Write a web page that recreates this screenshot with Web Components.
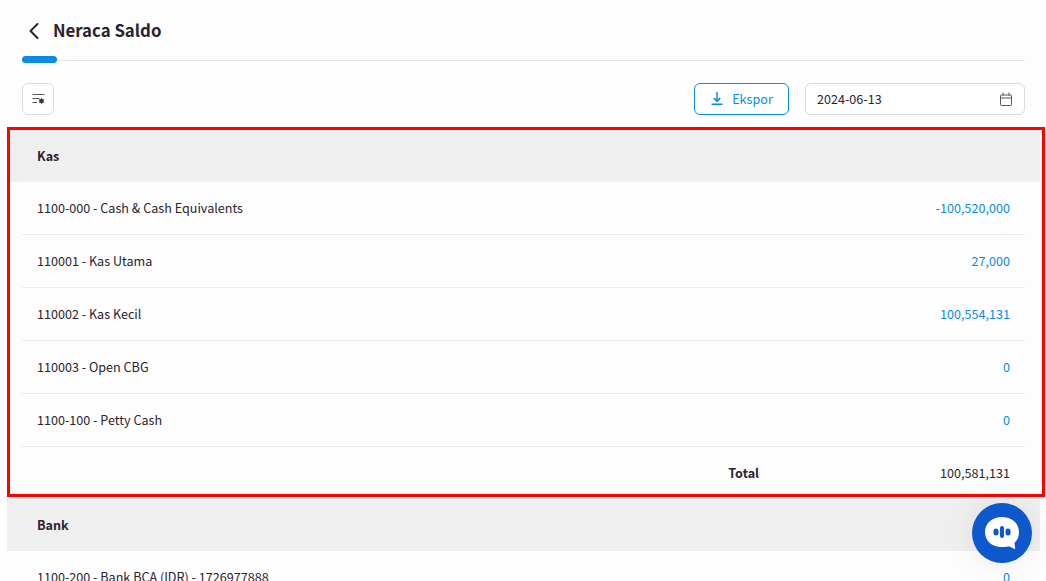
<!DOCTYPE html>
<html>
<head>
<meta charset="utf-8">
<title>Neraca Saldo</title>
<style>
  html, body { margin: 0; height: 581px; overflow: hidden; background: #fdfdfd; }
  body { font-family: "Noto Sans CJK JP", "Noto Sans", sans-serif; color: #2b2330; font-size: 12.6px; }
</style>
</head>
<body>
<page-header title="Neraca Saldo"></page-header>
<page-toolbar date="2024-06-13"></page-toolbar>
<saldo-list>
  <saldo-group label="Kas">
    <saldo-row name="1100-000 - Cash &amp; Cash Equivalents" value="-100,520,000"></saldo-row>
    <saldo-row name="110001 - Kas Utama" value="27,000"></saldo-row>
    <saldo-row name="110002 - Kas Kecil" value="100,554,131"></saldo-row>
    <saldo-row name="110003 - Open CBG" value="0"></saldo-row>
    <saldo-row name="1100-100 - Petty Cash" value="0"></saldo-row>
    <saldo-total value="100,581,131"></saldo-total>
  </saldo-group>
  <saldo-group label="Bank">
    <saldo-row name="1100-200 - Bank BCA (IDR) - 1726977888" value="0"></saldo-row>
  </saldo-group>
</saldo-list>
<highlight-box></highlight-box>
<chat-button></chat-button>

<script>
// Header with back arrow and tab underline
class PageHeader extends HTMLElement {
  connectedCallback() {
    const shadowRoot = this.attachShadow({ mode: "open" });
    shadowRoot.innerHTML = `
      <style>
        :host { display: block; padding: 0 21px 0 22px; }
        .top { display: flex; align-items: center; gap: 11px; height: 56px; padding-top: 4px; box-sizing: border-box; }
        svg { display: block; margin-left: 4px; }
        h1 { margin: 0; font-size: 16.8px; line-height: 20px; font-weight: 700; color: #2b2330; }
        .tabs { height: 4px; border-bottom: 1px solid #e6e6e6; }
        .tabs i { display: block; width: 35px; height: 7px; border-radius: 4px; background: #0a8be6; }
      </style>
      <div class="top">
        <svg width="16" height="20" viewBox="0 0 16 20" fill="none" stroke="#2b2330" stroke-width="2" stroke-linecap="round" stroke-linejoin="round"><path d="M11.500 4 4.500 11 11.500 18"/></svg>
        <h1>${this.getAttribute("title")}</h1>
      </div>
      <div class="tabs"><i></i></div>`;
  }
}
customElements.define("page-header", PageHeader);

// Filter button, export button, date field
class PageToolbar extends HTMLElement {
  connectedCallback() {
    const shadowRoot = this.attachShadow({ mode: "open" });
    shadowRoot.innerHTML = `
      <style>
        :host { display: flex; align-items: center; padding: 22px 21px 14px 22px; }
        .filter { width: 32px; height: 32px; box-sizing: border-box; border: 1px solid #dcdcdc; border-radius: 6px; background: #fff; display: flex; align-items: center; justify-content: center; }
        .export { margin-left: auto; width: 95px; height: 32px; box-sizing: border-box; border: 1px solid #0a8be6; border-radius: 6px; background: #fff; color: #0a8be6; display: flex; align-items: center; justify-content: center; gap: 8px; }
        .date { margin-left: 16px; width: 220px; height: 32px; box-sizing: border-box; border: 1px solid #dcdcdc; border-radius: 6px; background: #fff; display: flex; align-items: center; justify-content: space-between; padding: 0 11px; }
        span { padding-bottom: 2px; }
      </style>
      <div class="filter">
        <svg width="14" height="12" viewBox="0 0 14 12" fill="none">
          <path d="M1.500 1.500H13.500M1.500 5.500H8.500M1.500 9.500H6" stroke="#5b5560" stroke-width="1.200"/>
          <circle cx="10.500" cy="8" r="2.300" fill="#3f3945"/>
          <path d="M10.500 4.800V11.200M7.700 6.400 13.300 9.600M7.700 9.600 13.300 6.400" stroke="#3f3945" stroke-width=".8"/>
        </svg>
      </div>
      <div class="export">
        <svg width="14" height="14" viewBox="0 0 14 14" fill="none" stroke="#0a8be6" stroke-width="1.500"><path d="M7 0V9"/><path d="M3.800 6 7 9.300 10.200 6" stroke-width="1.600"/><path d="M1.500 12.250H12.500"/></svg>
        <span>Ekspor</span>
      </div>
      <div class="date">
        <span>${this.getAttribute("date")}</span>
        <svg width="14" height="14" viewBox="0 0 14 14" fill="none" stroke="#5b5560" stroke-width="1"><rect x="1.500" y="3" width="11" height="10.500" rx=".8"/><path d="M1.500 6H12.500M4 .5V3.500M10 .5V3.500"/></svg>
      </div>`;
  }
}
customElements.define("page-toolbar", PageToolbar);

class SaldoList extends HTMLElement {
  constructor() {
    super();
    this.attachShadow({ mode: "open" }).innerHTML = `
      <style>:host { display: block; padding: 0 6px 0 7px; }</style>
      <slot></slot>`;
  }
}
customElements.define("saldo-list", SaldoList);

class SaldoGroup extends HTMLElement {
  connectedCallback() {
    const shadowRoot = this.attachShadow({ mode: "open" });
    shadowRoot.innerHTML = `
      <style>
        :host { display: block; }
        .head { height: 53px; background: #efefef; display: flex; align-items: center; padding-left: 30px; font-weight: 700; }
        .rows { padding: 0 15px; }
      </style>
      <div class="head">${this.getAttribute("label")}</div>
      <div class="rows"><slot></slot></div>`;
  }
}
customElements.define("saldo-group", SaldoGroup);

class SaldoRow extends HTMLElement {
  connectedCallback() {
    const shadowRoot = this.attachShadow({ mode: "open" });
    shadowRoot.innerHTML = `
      <style>
        :host { display: flex; align-items: center; justify-content: space-between; height: 53px; box-sizing: border-box; padding: 0 15px 2px; border-bottom: 1px solid #ececec; }
        .value { color: #0a8be6; }
      </style>
      <span></span>
      <span class="value"></span>`;
    shadowRoot.querySelector("span").textContent = this.getAttribute("name");
    shadowRoot.querySelector(".value").textContent = this.getAttribute("value");
  }
}
customElements.define("saldo-row", SaldoRow);

class SaldoTotal extends HTMLElement {
  connectedCallback() {
    const shadowRoot = this.attachShadow({ mode: "open" });
    shadowRoot.innerHTML = `
      <style>
        :host { display: flex; align-items: center; justify-content: flex-end; height: 51px; padding: 0 15px; }
        b { margin-right: 181px; font-weight: 700; }
      </style>
      <b>Total</b>
      <span>${this.getAttribute("value")}</span>`;
  }
}
customElements.define("saldo-total", SaldoTotal);

// Red annotation frame, lies over the first group
class HighlightBox extends HTMLElement {
  constructor() {
    super();
    this.attachShadow({ mode: "open" }).innerHTML = `
      <style>
        :host { display: block; position: absolute; left: 7px; top: 127px; width: 1038px; height: 370px; box-sizing: border-box; border: 3px solid #f00; pointer-events: none; }
      </style>`;
  }
}
customElements.define("highlight-box", HighlightBox);

class ChatButton extends HTMLElement {
  constructor() {
    super();
    this.attachShadow({ mode: "open" }).innerHTML = `
      <style>
        :host { display: block; position: absolute; left: 972px; top: 503px; width: 60px; height: 60px; border-radius: 50%; background: #0c58cc; box-shadow: 0 0 30px rgba(0,0,0,.08); }
        svg { display: block; }
      </style>
      <svg width="60" height="60" viewBox="0 0 60 60">
        <path d="M30 14C20 14 13 20.500 13 29C13 38 20 44 30 44C32.500 44 35 43.800 37 43.200L42.500 46C43 46.200 43.300 45.800 43.200 45.300L42.500 40C45.500 37 47 33.500 47 29C47 20.500 40 14 30 14Z" fill="#fff"/>
        <rect x="21.500" y="25.500" width="5" height="7" rx="2.500" fill="#0c58cc"/>
        <rect x="28" y="23" width="4" height="12" rx="2" fill="#0c58cc"/>
        <rect x="33.500" y="25.500" width="5" height="7" rx="2.500" fill="#0c58cc"/>
      </svg>`;
  }
}
customElements.define("chat-button", ChatButton);
</script>
</body>
</html>
